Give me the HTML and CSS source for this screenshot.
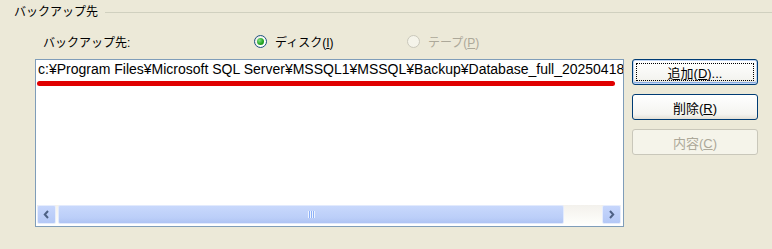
FILE: index.html
```html
<!DOCTYPE html>
<html lang="ja">
<head>
  <meta charset="UTF-8" />
  <title>バックアップ先</title>
  <link rel="stylesheet" href="styles.css">
</head>
<body>
  <div class="group">
    <div class="group-head">
      <span class="group-title">バックアップ先</span>
      <span class="group-line"></span>
    </div>

    <div class="dest-row">
      <span class="dest-label">バックアップ先:</span>
      <label class="radio checked"><span class="radio-box"></span><span>ディスク(<u>I</u>)</span></label>
      <label class="radio disabled"><span class="radio-box"></span><span>テープ(<u>P</u>)</span></label>
    </div>

    <div class="main-row">
      <div class="listbox">
        <div class="list-items">
          <div class="list-item">c:¥Program Files¥Microsoft SQL Server¥MSSQL1¥MSSQL¥Backup¥Database_full_20250418</div>
          <div class="mark"></div>
        </div>
        <div class="hscroll">
          <span class="arrow">
            <svg width="7" height="9" viewBox="0 0 7 9"><polyline points="5,1 1.8,4.5 5,8" fill="none" stroke="#4d6185" stroke-width="2"/></svg>
          </span>
          <span class="thumb"><span class="grip"></span></span>
          <span class="track"></span>
          <span class="arrow">
            <svg width="7" height="9" viewBox="0 0 7 9"><polyline points="2,1 5.2,4.5 2,8" fill="none" stroke="#4d6185" stroke-width="2"/></svg>
          </span>
        </div>
      </div>

      <div class="buttons">
        <button class="btn focused">追加(<u>D</u>)...</button>
        <button class="btn">削除(<u>R</u>)</button>
        <button class="btn" disabled>内容(<u>C</u>)</button>
      </div>
    </div>
  </div>
</body>
</html>
```

FILE: styles.css
```css
body {
  margin: 0;
  background: #ece9d8;
  font-family: "Liberation Sans", "Noto Sans CJK JP", sans-serif;
  font-size: 12px;
  color: #000;
  overflow: hidden;
}

.group {
  padding: 5px 0 0 14px;
}

.group-head {
  display: flex;
  align-items: center;
  gap: 7px;
  height: 14px;
}

.group-title {
  line-height: 14px;
}

.group-line {
  flex: 1;
  height: 1px;
  background: #d0d0bf;
}

.dest-row {
  display: flex;
  align-items: center;
  height: 18px;
  margin-top: 13px;
  padding-left: 29px;
}

.dest-label {
  width: 211px;
}

.radio {
  display: flex;
  align-items: center;
  gap: 8px;
  width: 153px;
}

.radio u {
  text-underline-offset: 1px;
}

.radio-box {
  width: 11px;
  height: 11px;
  border: 1px solid #1c5180;
  border-radius: 50%;
  background: radial-gradient(circle at 60% 60%, #fff 40%, #dcd9cf 100%);
  position: relative;
}

.radio.checked .radio-box::after {
  content: "";
  position: absolute;
  left: 2px;
  top: 2px;
  width: 7px;
  height: 7px;
  border-radius: 50%;
  background: radial-gradient(circle at 35% 35%, #7fe07f 0%, #21a121 60%, #1c8a1c 100%);
}

.radio.disabled {
  color: #aca899;
}

.radio.disabled .radio-box {
  border-color: #cac8bb;
  background: #f5f4ea;
}

.main-row {
  display: flex;
  margin-top: 9px;
  margin-left: 21px;
}

.listbox {
  width: 587px;
  height: 166px;
  border: 1px solid #7f9db9;
  background: #fff;
  display: flex;
  flex-direction: column;
}

.list-items {
  flex: 1;
  position: relative;
  overflow: hidden;
}

.list-item {
  white-space: nowrap;
  padding: 1px 0 0 2px;
  font-family: "Liberation Sans", sans-serif;
  font-size: 14px;
  line-height: 17px;
}

/* 赤い下線（注釈） */
.mark {
  position: absolute;
  left: 1px;
  top: 21px;
  width: 578px;
  height: 5px;
  border-radius: 3px;
  background: #e00000;
}

.hscroll {
  display: flex;
  height: 19px;
  margin: 0 2px 2px 1px;
  background: linear-gradient(to bottom, #f3f1ec, #fefefb);
}

.arrow {
  width: 17px;
  height: 17px;
  border: 1px solid #e6edfd;
  border-radius: 2px;
  background: linear-gradient(to bottom, #c6d6fc, #b4c8f6);
  display: flex;
  align-items: center;
  justify-content: center;
}

.thumb {
  width: 504px;
  margin-left: 2px;
  border: 1px solid #e2eafd;
  border-radius: 2px;
  background: linear-gradient(to bottom, #c8d8fc, #bbcef8 70%, #aec3f3);
  display: flex;
  align-items: center;
  justify-content: center;
}

.grip {
  width: 7px;
  height: 7px;
  background: repeating-linear-gradient(to right, #eef4fe 0 1px, #8cb0f8 1px 2px);
}

.track {
  flex: 1;
}

.buttons {
  display: flex;
  flex-direction: column;
  gap: 9px;
  margin-left: 8px;
}

.btn {
  width: 126px;
  height: 26px;
  border: 1px solid #003c74;
  border-radius: 3px;
  background: linear-gradient(to bottom, #ffffff, #f4f4f0 80%, #e3e0d6);
  font-family: inherit;
  font-size: 13px;
  color: #000;
  padding: 0;
  position: relative;
}

.btn u {
  text-underline-offset: 1px;
}

.btn.focused {
  box-shadow: inset 0 0 0 1px #c2d7f4, inset 0 -1px 0 1px #89ade4;
}

.btn.focused::after {
  content: "";
  position: absolute;
  inset: 3px;
  border: 1px dotted #000;
}

.btn:disabled {
  border-color: #c9c7ba;
  background: #f5f4ea;
  color: #aca899;
}
```
